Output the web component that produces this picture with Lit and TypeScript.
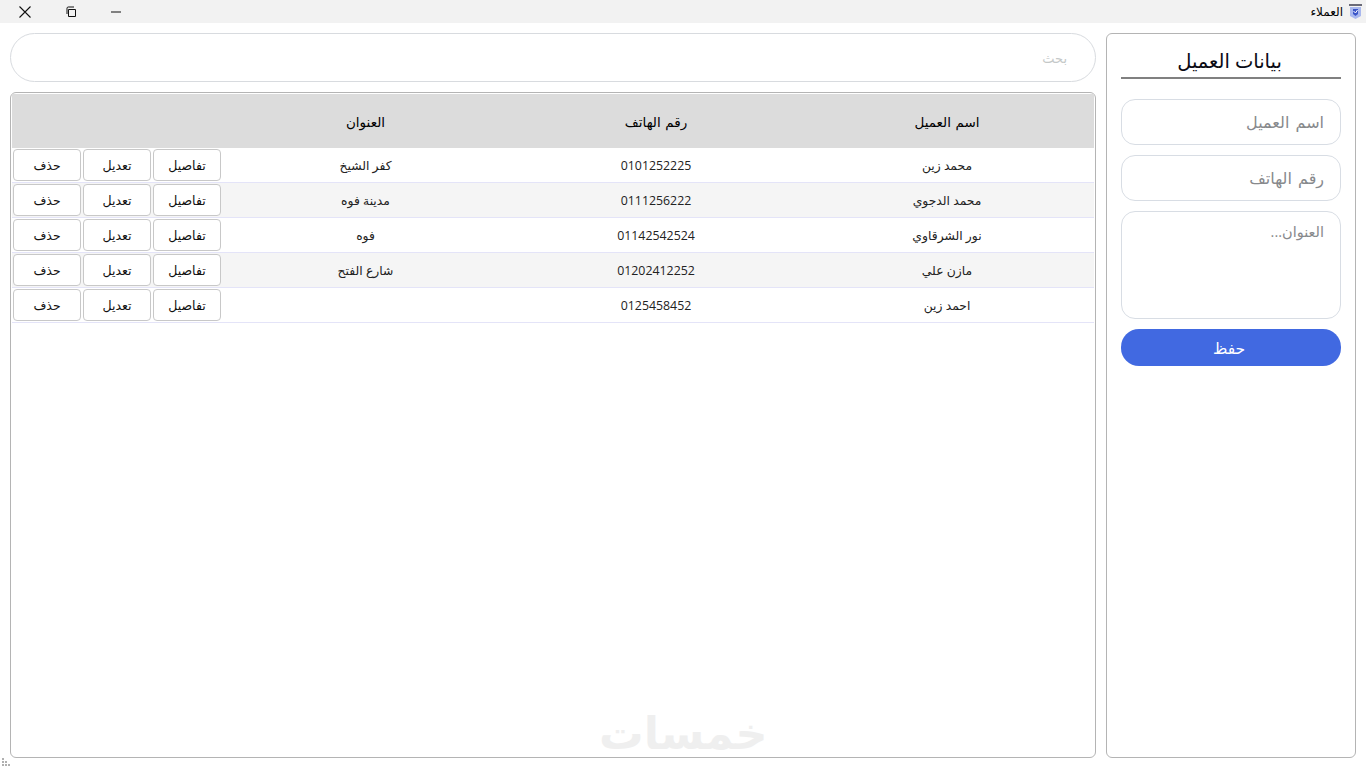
import { LitElement, html, css } from "lit";
import { customElement } from "lit/decorators.js";

const rows = [
  ["محمد زين", "0101252225", "كفر الشيخ"],
  ["محمد الدجوي", "0111256222", "مدينة فوه"],
  ["نور الشرقاوي", "01142542524", "فوه"],
  ["مازن علي", "01202412252", "شارع الفتح"],
  ["احمد زين", "0125458452", ""],
];

@customElement("app-root")
export class AppRoot extends LitElement {
  static styles = css`
    :host { display: block; height: 768px; overflow: hidden; background: #fff; color: #1a1a1a; font-family: "Open Sans", "DejaVu Sans", sans-serif; position: relative; }
    .titlebar { height: 23px; background: #f2f2f2; display: flex; align-items: center; justify-content: space-between; }
    .controls { display: flex; align-items: center; padding-left: 19px; }
    .controls svg { display: block; }
    .ctl-restore { margin-left: 35px; }
    .ctl-min { margin-left: 35px; }
    .title { display: flex; align-items: center; gap: 5px; padding-right: 3px; font-size: 12px; color: #000; }
    .main { direction: rtl; display: flex; gap: 10px; padding: 10px; height: 745px; box-sizing: border-box; }
    .side { width: 250px; box-sizing: border-box; border: 1px solid #b4b4b4; border-radius: 6px; padding: 14px 14px 0; display: flex; flex-direction: column; flex: none; }
    h2 { margin: 0 0 20px; height: 29px; padding-right: 3px; font-size: 19.5px; font-weight: 400; line-height: 25px; text-align: center; color: #0a0a14; border-bottom: 2px solid #808080; }
    .field { box-sizing: border-box; width: 220px; height: 46px; border: 1px solid #d8dde4; border-radius: 14px; background: #fff; padding: 0 16px; font: 16px "Open Sans", "DejaVu Sans", sans-serif; word-spacing: 2px; direction: rtl; outline: none; margin-bottom: 10px; display: block; }
    textarea.field { height: 108px; padding-top: 10px; resize: none; font-size: 14.5px; }
    .field::placeholder { color: #87898c; opacity: 1; }
    .save { width: 220px; height: 37px; border: none; border-radius: 18px; background: #4169e1; color: #fff; padding: 0 4px 0 0; font: 15.5px "Open Sans", "DejaVu Sans", sans-serif; }
    .content { flex: 1; display: flex; flex-direction: column; gap: 10px; min-width: 0; }
    .search { box-sizing: border-box; width: 100%; height: 49px; border: 1px solid #d8dbdf; border-radius: 25px; padding: 0 28px; font: 13px "Open Sans", "DejaVu Sans", sans-serif; direction: rtl; outline: none; }
    .search::placeholder { color: #c4c8c8; opacity: 1; }
    .card { flex: 1; box-sizing: border-box; border: 1px solid #b4b4b4; border-radius: 6px; padding: 1px; position: relative; }
    table { width: 100%; border-collapse: collapse; table-layout: fixed; }
    th { height: 54px; background: #dcdcdc; font-size: 13.5px; font-weight: 400; word-spacing: 1px; color: #000; padding: 2px 0 0; box-sizing: border-box; }
    td { height: 34px; border-bottom: 1px solid #e4e4f8; font-size: 12.35px; text-align: center; padding: 0; color: #222; }
    tbody tr:nth-child(even) td { background: #f5f5f5; }
    .c1 { width: 294px; }
    .c2 { width: 288px; }
    .c3 { width: 290px; }
    th.c3, td.addr { padding-right: 3px; }
    .actions { display: flex; gap: 2px; justify-content: flex-start; padding-right: 1px; }
    .actions button { box-sizing: border-box; width: 68px; height: 32px; background: #fff; border: 1px solid #c8c8c8; border-radius: 4px; font: 12.5px "Open Sans", "DejaVu Sans", sans-serif; color: #111; padding: 0; }
    .watermark { position: absolute; left: 588px; bottom: 0; font: 700 44.500px "Open Sans", "DejaVu Sans", sans-serif; color: #efefef; direction: rtl; line-height: 50px; }
    .grip { position: absolute; left: 2px; bottom: 2px; display: block; }
  `;

  render() {
    return html`
      <div class="titlebar">
        <div class="controls">
          <svg width="12" height="12" viewBox="0 0 12 12"><path d="M.5 .5 L11.500 11.500 M11.500 .5 L.5 11.500" stroke="#111" stroke-width="1.1" fill="none"/></svg>
          <svg class="ctl-restore" width="10" height="11" viewBox="0 0 10 11"><path d="M2.5 3.5h7v7h-7z M1 8V2.2C1 1.5 1.5 1 2.2 1H8" stroke="#111" fill="none"/></svg>
          <svg class="ctl-min" width="10" height="2" viewBox="0 0 10 2"><path d="M0 1h10" stroke="#111" fill="none"/></svg>
        </div>
        <div class="title">
          <span>العملاء</span>
          <svg width="15" height="17" viewBox="0 0 15 17">
            <path d="M1 1h13v2H1z" fill="#6a6a78"/>
            <path d="M2 4h11v9l-5.500 3L2 13z" fill="#a9b8ee"/>
            <path d="M5 6h5v5l-2.500 2L5 11z" fill="#3a55c8"/>
            <path d="M5.500 8l2 2 2-3" stroke="#fff" fill="none"/>
          </svg>
        </div>
      </div>
      <div class="main">
        <aside class="side">
          <h2>بيانات العميل</h2>
          <input class="field" placeholder="اسم العميل" />
          <input class="field" placeholder="رقم الهاتف" />
          <textarea class="field" placeholder="العنوان..."></textarea>
          <button class="save">حفظ</button>
        </aside>
        <section class="content">
          <input class="search" placeholder="بحث" />
          <div class="card">
            <table>
              <thead>
                <tr>
                  <th class="c1">اسم العميل</th>
                  <th class="c2">رقم الهاتف</th>
                  <th class="c3">العنوان</th>
                  <th></th>
                </tr>
              </thead>
              <tbody>
                ${rows.map(
                  (r) => html`<tr>
                    <td>${r[0]}</td>
                    <td>${r[1]}</td>
                    <td class="addr">${r[2]}</td>
                    <td>
                      <div class="actions">
                        <button>تفاصيل</button>
                        <button>تعديل</button>
                        <button>حذف</button>
                      </div>
                    </td>
                  </tr>`
                )}
              </tbody>
            </table>
            <div class="watermark">خمسات</div>
          </div>
        </section>
      </div>
      <svg class="grip" width="8" height="8" viewBox="0 0 8 8" fill="#b0b0b0">
        <rect x="0" y="0" width="2" height="2"/><rect x="0" y="3" width="2" height="2"/><rect x="3" y="3" width="2" height="2"/>
        <rect x="0" y="6" width="2" height="2"/><rect x="3" y="6" width="2" height="2"/><rect x="6" y="6" width="2" height="2"/>
      </svg>
    `;
  }
}
